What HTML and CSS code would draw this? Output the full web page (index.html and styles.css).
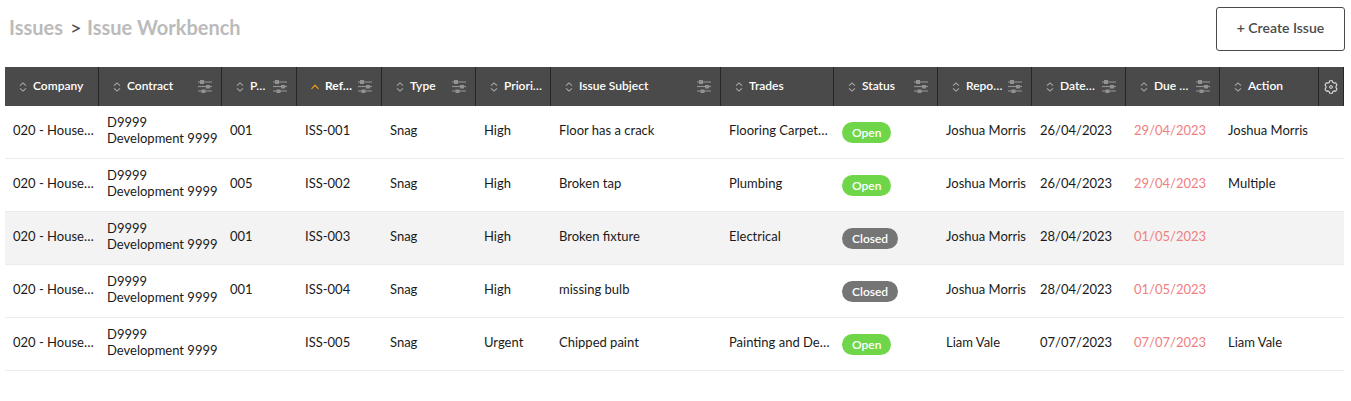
FILE: index.html
```html
<!DOCTYPE html>
<html lang="en">
<head>
<meta charset="utf-8">
<title>Issue Workbench</title>
<link rel="stylesheet" href="styles.css">
</head>
<body>
<svg class="defs" width="0" height="0">
  <symbol id="sort" viewBox="0 0 8 10"><path d="M1 3.7 4 .9 7 3.7M1 6.3 4 9.1 7 6.3" fill="none" stroke="currentColor" stroke-width="1.1"/></symbol>
  <symbol id="asc" viewBox="0 0 8 10"><path d="M.4 6.9 4 3.2 7.6 6.9" fill="none" stroke="currentColor" stroke-width="1.3"/></symbol>
  <symbol id="filter" viewBox="0 0 14 13"><path d="M0 2h14M0 11h14" stroke="currentColor" stroke-width="2" opacity=".55"/><path d="M0 6.5h14" stroke="currentColor" stroke-width="1.2"/><path d="M2 0h4v4H2zM8 5h4v3.5H8zM3.500 9.500h4V13h-4z" fill="currentColor"/></symbol>
  <symbol id="gear" viewBox="0 0 14 14"><path d="M5.700.7h2.600l.5 1.700 1.200.7 1.700-.4L13 5l-1 1.300v1.400L13 9l-1.300 2.300-1.700-.4-1.200.7-.5 1.700H5.700l-.5-1.700-1.200-.7-1.700.4L1 9l1-1.300V6.300L1 5l1.300-2.300 1.700.4 1.200-.7z" fill="none" stroke="currentColor" stroke-width="1.1" stroke-linejoin="round"/><circle cx="7" cy="7" r="1.4" fill="none" stroke="currentColor"/></symbol>
</svg>
<header class="topbar">
  <nav class="crumbs"><span>Issues</span><span class="sep">&gt;</span><span>Issue Workbench</span></nav>
  <button class="create">+ Create Issue</button>
</header>
<main class="grid">
  <div class="row head">
    <div class="th"><svg class="sort"><use href="#sort"/></svg><span>Company</span></div>
    <div class="th"><svg class="sort"><use href="#sort"/></svg><span>Contract</span><svg class="filter"><use href="#filter"/></svg></div>
    <div class="th"><svg class="sort"><use href="#sort"/></svg><span>P…</span><svg class="filter"><use href="#filter"/></svg></div>
    <div class="th sorted"><svg class="sort"><use href="#asc"/></svg><span>Ref…</span><svg class="filter"><use href="#filter"/></svg></div>
    <div class="th"><svg class="sort"><use href="#sort"/></svg><span>Type</span><svg class="filter"><use href="#filter"/></svg></div>
    <div class="th"><svg class="sort"><use href="#sort"/></svg><span>Priori…</span></div>
    <div class="th"><svg class="sort"><use href="#sort"/></svg><span>Issue Subject</span><svg class="filter"><use href="#filter"/></svg></div>
    <div class="th"><svg class="sort"><use href="#sort"/></svg><span>Trades</span></div>
    <div class="th"><svg class="sort"><use href="#sort"/></svg><span>Status</span><svg class="filter"><use href="#filter"/></svg></div>
    <div class="th"><svg class="sort"><use href="#sort"/></svg><span>Repo…</span><svg class="filter"><use href="#filter"/></svg></div>
    <div class="th"><svg class="sort"><use href="#sort"/></svg><span>Date…</span><svg class="filter"><use href="#filter"/></svg></div>
    <div class="th"><svg class="sort"><use href="#sort"/></svg><span>Due …</span><svg class="filter"><use href="#filter"/></svg></div>
    <div class="th"><svg class="sort"><use href="#sort"/></svg><span>Action</span></div>
    <div class="th settings"><svg class="gear"><use href="#gear"/></svg></div>
  </div>
  <div class="row">
    <div>020 - House…</div><div class="contract">D9999<br>Development 9999</div><div>001</div><div>ISS-001</div><div>Snag</div><div>High</div><div>Floor has a crack</div><div>Flooring Carpet…</div><div><span class="badge open">Open</span></div><div>Joshua Morris</div><div>26/04/2023</div><div class="due">29/04/2023</div><div>Joshua Morris</div><div></div>
  </div>
  <div class="row">
    <div>020 - House…</div><div class="contract">D9999<br>Development 9999</div><div>005</div><div>ISS-002</div><div>Snag</div><div>High</div><div>Broken tap</div><div>Plumbing</div><div><span class="badge open">Open</span></div><div>Joshua Morris</div><div>26/04/2023</div><div class="due">29/04/2023</div><div>Multiple</div><div></div>
  </div>
  <div class="row hover">
    <div>020 - House…</div><div class="contract">D9999<br>Development 9999</div><div>001</div><div>ISS-003</div><div>Snag</div><div>High</div><div>Broken fixture</div><div>Electrical</div><div><span class="badge closed">Closed</span></div><div>Joshua Morris</div><div>28/04/2023</div><div class="due">01/05/2023</div><div></div><div></div>
  </div>
  <div class="row">
    <div>020 - House…</div><div class="contract">D9999<br>Development 9999</div><div>001</div><div>ISS-004</div><div>Snag</div><div>High</div><div>missing bulb</div><div></div><div><span class="badge closed">Closed</span></div><div>Joshua Morris</div><div>28/04/2023</div><div class="due">01/05/2023</div><div></div><div></div>
  </div>
  <div class="row">
    <div>020 - House…</div><div class="contract">D9999<br>Development 9999</div><div></div><div>ISS-005</div><div>Snag</div><div>Urgent</div><div>Chipped paint</div><div>Painting and De…</div><div><span class="badge open">Open</span></div><div>Liam Vale</div><div>07/07/2023</div><div class="due">07/07/2023</div><div>Liam Vale</div><div></div>
  </div>
</main>
</body>
</html>
```
FILE: styles.css
```css
* { box-sizing: border-box; }
body { margin: 0; background: #fff; color: #1a1a1a; font: 13px/16px Lato, sans-serif; }
.defs { display: block; height: 0; }
.topbar { display: flex; justify-content: space-between; align-items: flex-start; height: 67px; padding: 7px 6px 0 9px; }
.crumbs { display: flex; gap: 7px; padding-top: 8px; font-size: 20px; line-height: 24px; font-weight: 700; color: #bbb; }
.sep { width: 10px; color: #4a4a4a; font-weight: 400; }
.create { width: 129px; height: 44px; padding: 0 0 2px; border: 1px solid #4a4a4a; border-radius: 3px; background: #fff; color: #4a4a4a; font: 600 14px/18px Lato, sans-serif; }
.grid { width: 1339px; margin-left: 5px; }
.row { display: grid; grid-template-columns: 94px 123px 75px 85px 94px 75px 170px 113px 104px 94px 94px 94px 99px 25px; height: 53px; border-bottom: 1px solid #ebebeb; }
.row > div { padding: 16px 0 0 8px; white-space: nowrap; }
.row > .contract { padding-top: 8px; }
.row.hover { background: #f3f3f3; }
.row.head { height: 39px; border: 0; background: #4a4a4a; color: #fff; font-size: 12px; font-weight: 600; }
.row.head > .th { display: flex; align-items: center; padding: 0 9px 0 14px; border-right: 1px solid #262626; }
.row.head > .settings { justify-content: center; padding: 0; }
.th span { padding-bottom: 2px; }
.row.head > .sorted { font-weight: 700; }
.sort { width: 8px; height: 10px; margin-right: 6px; color: #a8a8a8; flex: none; }
.sorted .sort { color: #e69a17; }
.filter { width: 14px; height: 13px; margin-left: auto; color: #929292; flex: none; }
.gear { width: 14px; height: 14px; color: #ddd; }
.due { color: #f08080; }
.badge { display: inline-block; height: 21px; padding: 0 10px; border-radius: 11px; color: #fff; font-size: 12px; line-height: 21px; font-weight: 600; }
.open { background: #6fd649; }
.closed { background: #757575; }
```
